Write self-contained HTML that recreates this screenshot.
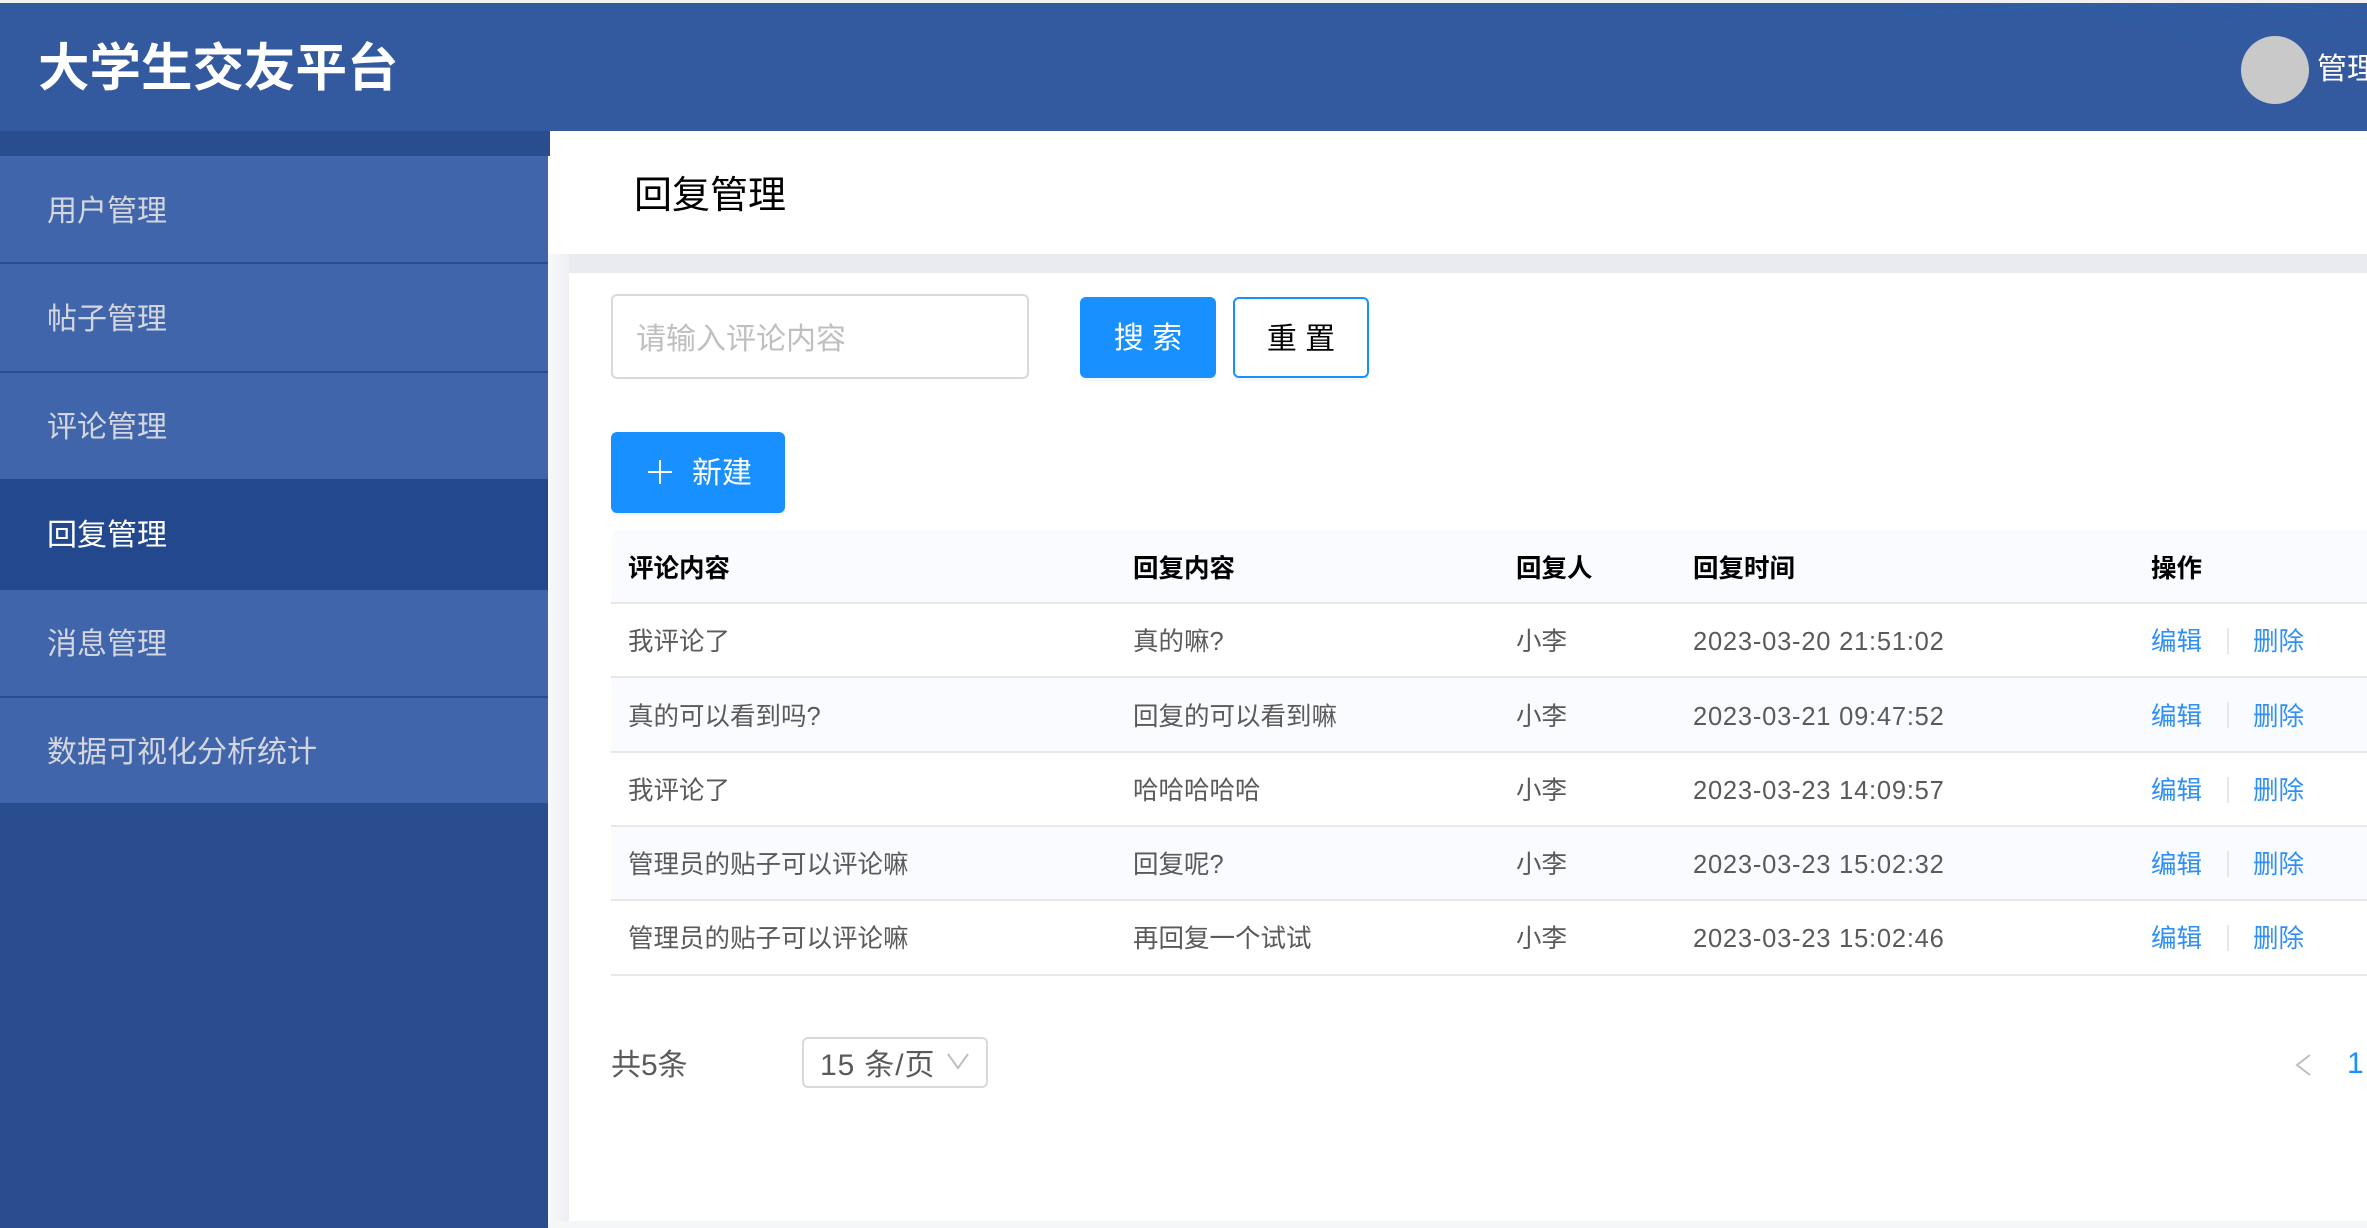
<!DOCTYPE html>
<html lang="zh-CN">
<head>
<meta charset="utf-8">
<title>回复管理</title>
<style>
html,body{margin:0;padding:0;width:2367px;height:1228px;overflow:hidden;background:#fff}
body{position:relative;font-family:"Liberation Sans","Noto Sans CJK SC",sans-serif}
.a{position:absolute;white-space:nowrap}
.b{position:absolute;box-sizing:border-box}
.m{left:47px;font-size:30px;line-height:40px;color:#d3d6df}
.h{font-size:25.5px;line-height:34px;font-weight:700;color:#000}
.t{font-size:25.5px;line-height:34px;color:#5a5a5a}
.d{font-size:25.5px;line-height:34px;color:#5a5a5a;letter-spacing:.78px}
.l{font-size:25.5px;line-height:34px;color:#2f8ff5}
.btn{font-size:30px;line-height:40px;text-align:center}
</style>
</head>
<body>
<!-- top header -->
<div class="b" style="left:0;top:0;width:2367px;height:3px;background:#f1f1f1"></div>
<div class="b" style="left:0;top:3px;width:2367px;height:128px;background:#33599f"></div>
<svg class="a" style="left:1880px;top:3px" width="487" height="60" viewBox="0 0 487 60" fill="none" stroke="#2a62a8" stroke-width="1.5" opacity=".75">
<path d="M22 10C80 8 130 4 190 2"/><path d="M22 12C80 10 130 6 190 4"/>
<path d="M190 2C260 20 320 36 400 50"/><path d="M205 2C275 18 340 30 420 42"/><path d="M235 2C300 14 370 24 487 36"/><path d="M270 2C340 10 410 16 487 24"/><path d="M320 2C380 6 430 10 487 14"/><path d="M380 2C420 4 450 6 487 8"/>
</svg>
<div class="a" style="left:38px;top:35px;font-size:51.5px;line-height:66px;font-weight:700;color:#fff">大学生交友平台</div>
<div class="b" style="left:2241px;top:36px;width:68px;height:68px;border-radius:50%;background:#c9c9c9"></div>
<div class="a" style="left:2317px;top:50px;font-size:30px;line-height:40px;color:#fff">管理员</div>

<!-- sidebar -->
<div class="b" style="left:0;top:131px;width:550px;height:25px;background:#2a4d90"></div>
<div class="b" style="left:0;top:156px;width:548px;height:1072px;background:#2a4d90"></div>
<div class="b" style="left:0;top:156px;width:548px;height:106px;background:#4065ab"></div>
<div class="b" style="left:0;top:264px;width:548px;height:107px;background:#4065ab"></div>
<div class="b" style="left:0;top:373px;width:548px;height:106px;background:#4065ab"></div>
<div class="b" style="left:0;top:479px;width:548px;height:111px;background:#23488e"></div>
<div class="b" style="left:0;top:590px;width:548px;height:106px;background:#4065ab"></div>
<div class="b" style="left:0;top:698px;width:548px;height:105px;background:#4065ab"></div>
<div class="a m" style="top:192px">用户管理</div>
<div class="a m" style="top:300px">帖子管理</div>
<div class="a m" style="top:408px">评论管理</div>
<div class="a m" style="top:516px;color:#fff">回复管理</div>
<div class="a m" style="top:625px">消息管理</div>
<div class="a m" style="top:733px">数据可视化分析统计</div>

<!-- page title -->
<div class="a" style="left:634px;top:171px;font-size:38px;line-height:50px;color:#000">回复管理</div>
<div class="b" style="left:548px;top:254px;width:1819px;height:19px;background:#eaebf0"></div>
<div class="b" style="left:548px;top:254px;width:21px;height:974px;background:linear-gradient(90deg,#f7f8fa,#eeeff3)"></div>
<div class="b" style="left:548px;top:1221px;width:1819px;height:7px;background:#f5f6f8"></div>

<!-- search -->
<div class="b" style="left:611px;top:294px;width:418px;height:85px;border:2px solid #d9d9d9;border-radius:6px;background:#fff"></div>
<div class="a" style="left:636px;top:320px;font-size:30px;line-height:40px;color:#bfbfbf">请输入评论内容</div>
<div class="b btn" style="left:1080px;top:297px;width:136px;height:81px;background:#1890ff;border-radius:6px;color:#fff;line-height:84px;box-shadow:0 3px 0 rgba(0,0,0,.035)">搜 索</div>
<div class="b btn" style="left:1233px;top:297px;width:136px;height:81px;background:#fff;border:2px solid #1890ff;border-radius:6px;color:#000;line-height:81px;box-shadow:0 3px 0 rgba(0,0,0,.03)">重 置</div>

<!-- new -->
<div class="b" style="left:611px;top:432px;width:174px;height:81px;background:#1890ff;border-radius:6px;box-shadow:0 3px 0 rgba(0,0,0,.035)"></div>
<svg class="a" style="left:648px;top:460px" width="24" height="24" viewBox="0 0 24 24"><path d="M12 0V24M0 12H24" stroke="#fff" stroke-width="2"/></svg>
<div class="a btn" style="left:692px;top:454px;color:#fff">新建</div>

<!-- table -->
<div class="b" style="left:611px;top:530px;width:1756px;height:74px;background:#fafbff;border-bottom:2px solid #e8e8e8;border-radius:6px 0 0 0"></div>
<div class="b" style="left:611px;top:604px;width:1756px;height:74px;background:#fff;border-bottom:2px solid #e8e8e8"></div>
<div class="b" style="left:611px;top:678px;width:1756px;height:75px;background:#fafbff;border-bottom:2px solid #e8e8e8"></div>
<div class="b" style="left:611px;top:753px;width:1756px;height:74px;background:#fff;border-bottom:2px solid #e8e8e8"></div>
<div class="b" style="left:611px;top:827px;width:1756px;height:74px;background:#fafbff;border-bottom:2px solid #e8e8e8"></div>
<div class="b" style="left:611px;top:901px;width:1756px;height:75px;background:#fff;border-bottom:2px solid #e8e8e8"></div>

<div class="a h" style="left:628px;top:552px">评论内容</div>
<div class="a h" style="left:1133px;top:552px">回复内容</div>
<div class="a h" style="left:1516px;top:552px">回复人</div>
<div class="a h" style="left:1693px;top:552px">回复时间</div>
<div class="a h" style="left:2151px;top:552px">操作</div>

<div class="a t" style="left:628px;top:625px">我评论了</div>
<div class="a t" style="left:1133px;top:625px">真的嘛?</div>
<div class="a t" style="left:1516px;top:625px">小李</div>
<div class="a d" style="left:1693px;top:625px">2023-03-20 21:51:02</div>
<div class="a l" style="left:2151px;top:625px">编辑</div>
<div class="b" style="left:2227px;top:628px;width:2px;height:26px;background:#e8e8e8"></div>
<div class="a l" style="left:2253px;top:625px">删除</div>

<div class="a t" style="left:628px;top:700px">真的可以看到吗?</div>
<div class="a t" style="left:1133px;top:700px">回复的可以看到嘛</div>
<div class="a t" style="left:1516px;top:700px">小李</div>
<div class="a d" style="left:1693px;top:700px">2023-03-21 09:47:52</div>
<div class="a l" style="left:2151px;top:700px">编辑</div>
<div class="b" style="left:2227px;top:702px;width:2px;height:26px;background:#e8e8e8"></div>
<div class="a l" style="left:2253px;top:700px">删除</div>

<div class="a t" style="left:628px;top:774px">我评论了</div>
<div class="a t" style="left:1133px;top:774px">哈哈哈哈哈</div>
<div class="a t" style="left:1516px;top:774px">小李</div>
<div class="a d" style="left:1693px;top:774px">2023-03-23 14:09:57</div>
<div class="a l" style="left:2151px;top:774px">编辑</div>
<div class="b" style="left:2227px;top:777px;width:2px;height:26px;background:#e8e8e8"></div>
<div class="a l" style="left:2253px;top:774px">删除</div>

<div class="a t" style="left:628px;top:848px">管理员的贴子可以评论嘛</div>
<div class="a t" style="left:1133px;top:848px">回复呢?</div>
<div class="a t" style="left:1516px;top:848px">小李</div>
<div class="a d" style="left:1693px;top:848px">2023-03-23 15:02:32</div>
<div class="a l" style="left:2151px;top:848px">编辑</div>
<div class="b" style="left:2227px;top:851px;width:2px;height:26px;background:#e8e8e8"></div>
<div class="a l" style="left:2253px;top:848px">删除</div>

<div class="a t" style="left:628px;top:922px">管理员的贴子可以评论嘛</div>
<div class="a t" style="left:1133px;top:922px">再回复一个试试</div>
<div class="a t" style="left:1516px;top:922px">小李</div>
<div class="a d" style="left:1693px;top:922px">2023-03-23 15:02:46</div>
<div class="a l" style="left:2151px;top:922px">编辑</div>
<div class="b" style="left:2227px;top:925px;width:2px;height:26px;background:#e8e8e8"></div>
<div class="a l" style="left:2253px;top:922px">删除</div>

<!-- pagination -->
<div class="a" style="left:611px;top:1048px;font-size:30px;line-height:36px;color:#5a5a5a">共5条</div>
<div class="b" style="left:802px;top:1037px;width:186px;height:51px;border:2px solid #d9d9d9;border-radius:6px;background:#fff"></div>
<div class="a" style="left:820px;top:1046px;font-size:30px;line-height:40px;color:#5a5a5a;letter-spacing:.9px">15 条/页</div>
<svg class="a" style="left:947px;top:1053px" width="22" height="17" viewBox="0 0 22 17" fill="none"><path d="M1 1L11 15L21 1" stroke="#bfbfbf" stroke-width="2"/></svg>
<svg class="a" style="left:2295px;top:1054px" width="16" height="22" viewBox="0 0 16 22" fill="none"><path d="M15 1L2 11L15 21" stroke="#bfbfbf" stroke-width="2"/></svg>
<div class="a" style="left:2347px;top:1047px;font-size:30px;line-height:34px;color:#1890ff">1</div>
</body>
</html>
